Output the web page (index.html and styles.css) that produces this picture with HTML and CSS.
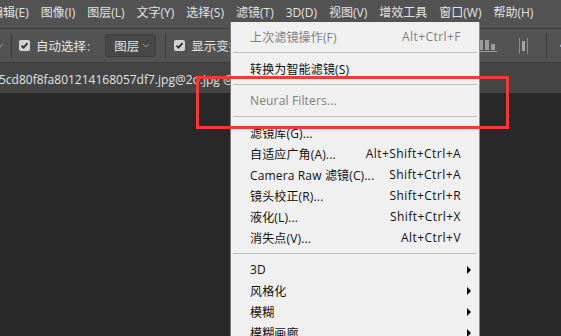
FILE: index.html
```html
<!DOCTYPE html>
<html lang="zh-CN">
  <head>
    <meta charset="UTF-8" />
    <meta name="viewport" content="width=device-width, initial-scale=1.0" />
    <title>Photoshop - 滤镜菜单</title>
    <link rel="stylesheet" href="styles.css">
  </head>
  <body>
    <div class="app">
      <nav class="menubar">
        <span class="menu-item">编辑(E)</span>
        <span class="menu-item">图像(I)</span>
        <span class="menu-item">图层(L)</span>
        <span class="menu-item">文字(Y)</span>
        <span class="menu-item">选择(S)</span>
        <span class="menu-item active">滤镜(T)</span>
        <span class="menu-item">3D(D)</span>
        <span class="menu-item">视图(V)</span>
        <span class="menu-item">增效工具</span>
        <span class="menu-item">窗口(W)</span>
        <span class="menu-item">帮助(H)</span>
      </nav>

      <div class="toolbar">
        <svg class="cut-chev" width="8" height="6" viewBox="0 0 8 6"><path d="M1 1l3 3 3-3" fill="none" stroke="#8a8a8a" stroke-width="1.2"/></svg>
        <span class="vsep"></span>
        <label class="check">
          <span class="box"><svg width="11" height="11" viewBox="0 0 11 11"><path d="M2.5 5.6l2 2 4-4.4" fill="none" stroke="#2e2e2e" stroke-width="1.8"/></svg></span>
          <span>自动选择<span class="colon">:</span></span>
        </label>
        <div class="select">
          <span>图层</span>
          <svg width="8" height="5" viewBox="0 0 8 5"><path d="M1 1l3 3 3-3" fill="none" stroke="#9a9a9a" stroke-width="1"/></svg>
        </div>
        <span class="vsep"></span>
        <label class="check">
          <span class="box"><svg width="11" height="11" viewBox="0 0 11 11"><path d="M2.5 5.6l2 2 4-4.4" fill="none" stroke="#2e2e2e" stroke-width="1.8"/></svg></span>
          <span>显示变换控件</span>
        </label>
        <div class="tools-right">
          <svg class="tool" width="20" height="16" viewBox="0 0 20 16">
            <rect x="2" y="2" width="4" height="10" fill="#9c9c9c"/>
            <rect x="8" y="2" width="4" height="10" fill="#9c9c9c"/>
            <rect x="14" y="6" width="4" height="6" fill="#9c9c9c"/>
            <rect x="0" y="13" width="20" height="1" fill="#9c9c9c"/>
          </svg>
          <svg class="tool" width="11" height="16" viewBox="0 0 11 16">
            <rect x="1" y="0" width="1" height="16" fill="#8e8e8e"/>
            <rect x="9" y="0" width="1" height="16" fill="#8e8e8e"/>
            <rect x="4" y="3" width="3" height="10" fill="#a6a6a6"/>
          </svg>
          <span class="vsep"></span>
          <span class="more">•••</span>
        </div>
      </div>

      <div class="tabbar">
        <span class="doc-tab">5cd80f8fa801214168057df7.jpg@2o.jpg @ 33.3%(RGB/8#)</span>
      </div>

      <div class="canvas"></div>

      <ul class="dropdown">
        <li class="item disabled"><span class="label">上次滤镜操作(F)</span><span class="key">Alt+Ctrl+F</span></li>
        <li class="sep"></li>
        <li class="item"><span class="label">转换为智能滤镜(S)</span></li>
        <li class="sep"></li>
        <li class="item disabled"><span class="label">Neural Filters...</span></li>
        <li class="sep"></li>
        <li class="item"><span class="label">滤镜库(G)...</span></li>
        <li class="item"><span class="label">自适应广角(A)...</span><span class="key">Alt+Shift+Ctrl+A</span></li>
        <li class="item"><span class="label">Camera Raw 滤镜(C)...</span><span class="key">Shift+Ctrl+A</span></li>
        <li class="item"><span class="label">镜头校正(R)...</span><span class="key">Shift+Ctrl+R</span></li>
        <li class="item"><span class="label">液化(L)...</span><span class="key">Shift+Ctrl+X</span></li>
        <li class="item"><span class="label">消失点(V)...</span><span class="key">Alt+Ctrl+V</span></li>
        <li class="sep"></li>
        <li class="item sub"><span class="label">3D</span><span class="arrow"></span></li>
        <li class="item sub"><span class="label">风格化</span><span class="arrow"></span></li>
        <li class="item sub"><span class="label">模糊</span><span class="arrow"></span></li>
        <li class="item sub"><span class="label">模糊画廊</span><span class="arrow"></span></li>
        <li class="item sub"><span class="label">扭曲</span><span class="arrow"></span></li>
      </ul>

      <div class="callout"></div>
    </div>
  </body>
</html>
```

FILE: styles.css
```css
* {
  box-sizing: border-box;
}
body {
  margin: 0;
  background: #282828;
  font-family: "Open Sans", "Noto Sans CJK SC", sans-serif;
  overflow: hidden;
}

.app {
  position: relative;
  width: 561px;
  height: 336px;
  display: flex;
  flex-direction: column;
  overflow: hidden;
}

/* top menu bar */
.menubar {
  height: 29px;
  flex: none;
  display: flex;
  align-items: center;
  gap: 12px;
  margin-left: -9px;
  padding-bottom: 2px;
  background: #535353;
  border-bottom: 1px solid #3e3e3e;
  color: #e2e2e2;
  font-size: 12px;
  white-space: nowrap;
}
.menu-item {
  line-height: 16px;
}

/* options bar */
.toolbar {
  height: 34px;
  flex: none;
  display: flex;
  align-items: center;
  background: #535353;
  border-bottom: 1px solid #3d3d3d;
  color: #e4e4e4;
  font-size: 12.5px;
  white-space: nowrap;
}
.cut-chev {
  margin-left: -4px;
}
.vsep {
  width: 1px;
  height: 24px;
  background: #3a3a3a;
  margin-left: 7px;
}
.check {
  display: flex;
  align-items: center;
  margin-left: 7px;
  gap: 6px;
}
.box {
  width: 11px;
  height: 11px;
  border-radius: 2px;
  background: #d2d2d2;
  display: flex;
}
.colon {
  margin-left: 1px;
  color: #c8c8ff;
}
.select {
  margin-left: 15px;
  width: 51px;
  height: 23px;
  display: flex;
  align-items: center;
  justify-content: space-between;
  padding: 0 5px 0 8px;
  background: #484848;
  border: 1px solid #3e3e3e;
  border-radius: 3px;
}
.select + .vsep {
  margin-left: 9px;
}
.select + .vsep + .check {
  margin-left: 8px;
}
.tools-right {
  margin-left: auto;
  display: flex;
  align-items: center;
  margin-right: -8px;
}
.tool {
  margin-left: 21px;
}
.tools-right .vsep {
  margin-left: 17px;
  height: 25px;
}
.more {
  margin-left: 13px;
  font-size: 11px;
  letter-spacing: -1px;
  color: #eaeaea;
}

/* document tab */
.tabbar {
  height: 30px;
  flex: none;
  display: flex;
  align-items: center;
  background: #454545;
  color: #e2e2e2;
  font-size: 12px;
  white-space: nowrap;
}
.doc-tab {
  margin-left: -1px;
  padding-top: 2px;
}
.canvas {
  flex: 1;
  background: #282828;
}

/* filter dropdown */
.dropdown {
  position: absolute;
  left: 230px;
  top: 22px;
  width: 250px;
  margin: 0;
  padding: 4px 0 0;
  list-style: none;
  background: #f0f0f0;
  border-left: 1px solid #7a7a7a;
  border-right: 1px solid #8a8a8a;
  font-size: 12px;
  letter-spacing: 0.15px;
  color: #111;
}
.item {
  height: 21px;
  display: flex;
  align-items: center;
  padding: 0 8px 0 19px;
  white-space: nowrap;
}
.item .label {
  flex: 1;
}
.item .key {
  margin-right: 10px;
  letter-spacing: 0.45px;
}
.item.disabled {
  color: #7f7f7f;
}
.arrow {
  width: 0;
  height: 0;
  border-left: 4px solid #000;
  border-top: 4px solid transparent;
  border-bottom: 4px solid transparent;
}
.sep {
  height: 1px;
  margin: 5px 2px;
  background: #bdbdbd;
}

/* annotation box */
.callout {
  position: absolute;
  left: 196px;
  top: 76px;
  width: 313px;
  height: 53px;
  border: 3px solid #ee3a3a;
}
```
